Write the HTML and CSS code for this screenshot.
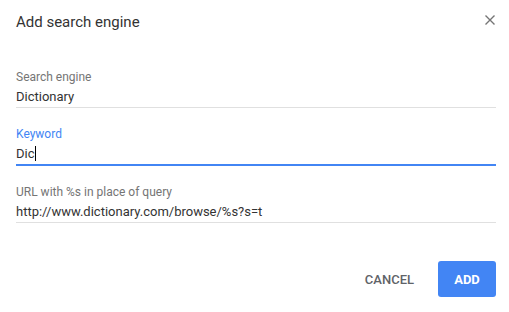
FILE: index.html
```html
<!DOCTYPE html>
<html>
<head>
<meta charset="utf-8">
<link rel="stylesheet" href="styles.css">
</head>
<body>
<div class="dialog">
  <div class="header">
    <div class="title">Add search engine</div>
    <svg class="close" width="10" height="10" viewBox="0 0 10 10"><path d="M0.5 0.5L9.5 9.5M9.5 0.5L0.5 9.5" stroke="#757575" stroke-width="1.4" fill="none"/></svg>
  </div>
  <div class="fields">
    <div class="field">
      <div class="label">Search engine</div>
      <div class="value">Dictionary</div>
    </div>
    <div class="field focused">
      <div class="label">Keyword</div>
      <div class="value">Dic<span class="caret"></span></div>
    </div>
    <div class="field">
      <div class="label">URL with %s in place of query</div>
      <div class="value">http://www.dictionary.com/browse/%s?s=t</div>
    </div>
  </div>
  <div class="actions">
    <button class="btn cancel">CANCEL</button>
    <button class="btn add">ADD</button>
  </div>
</div>
</body>
</html>
```
FILE: styles.css
```css
html, body {
  margin: 0;
  padding: 0;
  background: #fff;
}
body {
  font-family: Roboto, "Liberation Sans", sans-serif;
  color: #333;
}
.dialog {
  padding: 12px 13px 0 16px;
}
.header {
  display: flex;
  justify-content: space-between;
  align-items: flex-start;
}
.title {
  font-size: 15px;
  line-height: 20px;
  color: #333;
}
.close {
  margin-top: 3px;
  margin-right: 1px;
}
.fields {
  margin-top: 37px;
  display: flex;
  flex-direction: column;
  gap: 18px;
}
.field {
  border-bottom: 1px solid #e0e0e0;
}
.field.focused {
  border-bottom: 2px solid #4285f4;
}
.label {
  font-size: 12px;
  line-height: 16px;
  color: #757575;
  margin-bottom: 2px;
}
.focused .label {
  color: #4285f4;
}
.value {
  font-size: 13px;
  line-height: 20px;
  color: #333;
}
.caret {
  display: inline-block;
  width: 1px;
  height: 15px;
  background: #000;
  vertical-align: -3px;
}
.actions {
  margin-top: 38px;
  display: flex;
  justify-content: flex-end;
  gap: 8px;
}
.btn {
  font-family: Roboto, "Liberation Sans", sans-serif;
  font-size: 13px;
  font-weight: 500;
  height: 36px;
  border: none;
  border-radius: 3px;
  background: none;
  cursor: pointer;
}
.cancel {
  color: #5f6368;
  padding: 0 16px;
}
.add {
  background: #4285f4;
  color: #fff;
  font-weight: 700;
  width: 58px;
  padding: 0;
}
```
